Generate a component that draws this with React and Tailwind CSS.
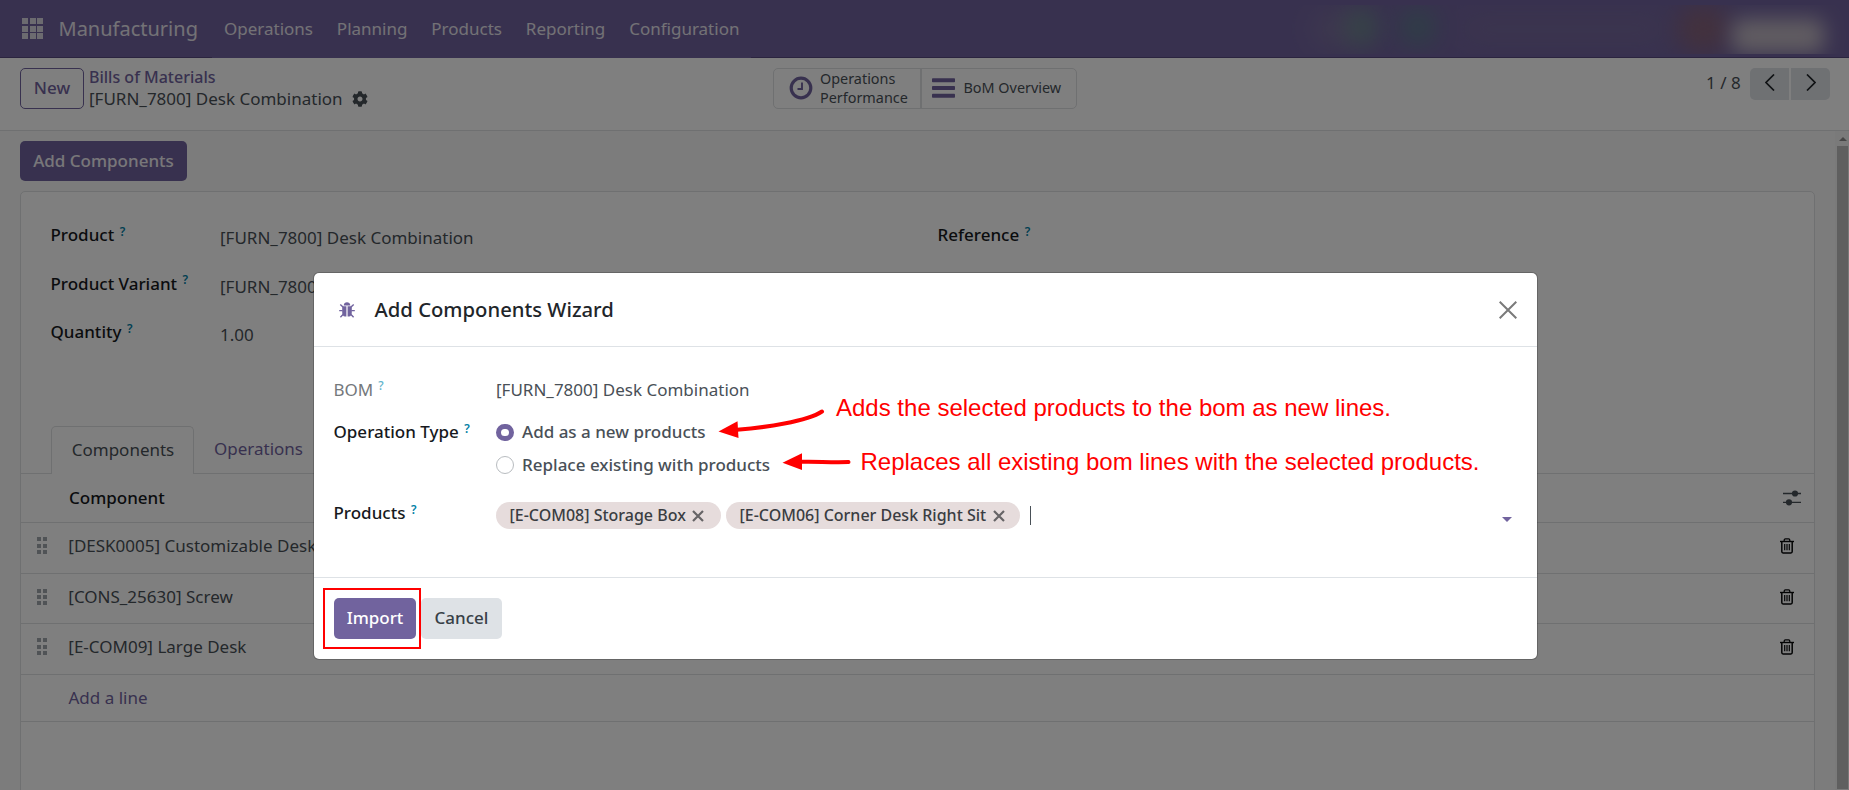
import React from "react";
import { FaCog } from "react-icons/fa";

const menus = ["Operations", "Planning", "Products", "Reporting", "Configuration"];

const lines = [
  { name: "[DESK0005] Customizable Desk", height: "h-[51px] pb-[5px]" },
  { name: "[CONS_25630] Screw", height: "h-[50px] pb-[3px]" },
  { name: "[E-COM09] Large Desk", height: "h-[51px] pb-[5px]" },
];

function AppsIcon() {
  return (
    <svg width="22" height="22" viewBox="0 0 22 22" fill="#d9d7e0" shapeRendering="crispEdges">
      {[0, 7.5, 15].map((y) =>
        [0, 7.5, 15].map((x) => <rect key={`${x}-${y}`} x={x} y={y} width="6.2" height="6.2" />)
      )}
    </svg>
  );
}

function ClockIcon() {
  return (
    <svg width="24" height="24" viewBox="0 0 24 24" fill="none" stroke="#71639e">
      <circle cx="12" cy="12" r="9.8" strokeWidth="3.2" />
      <path d="M13 6.5V13H8.5" strokeWidth="1.9" />
    </svg>
  );
}

function BarsIcon() {
  return (
    <svg width="23" height="20" viewBox="0 0 23 20" fill="#71639e">
      <rect y="0.3" width="23" height="4" rx="0.8" />
      <rect y="8" width="23" height="4" rx="0.8" />
      <rect y="15.7" width="23" height="4" rx="0.8" />
    </svg>
  );
}

function TrashIcon() {
  return (
    <svg width="14" height="16" viewBox="0 0 14 16" fill="none" stroke="#08090a">
      <path d="M0 3.5H14" strokeWidth="1.4" />
      <path d="M4.2 3.3V2.2C4.2 1.2 4.7 0.9 5.4 0.9H8.6C9.3 0.9 9.8 1.2 9.8 2.2V3.3" strokeWidth="1.3" />
      <path d="M1.8 3.5V13.6C1.8 14.5 2.2 14.9 3 14.9H11C11.8 14.9 12.2 14.5 12.2 13.6V3.5" strokeWidth="1.5" />
      <path d="M4.7 6V12.2M7 6V12.2M9.3 6V12.2" strokeWidth="1.2" />
    </svg>
  );
}

function SlidersIcon() {
  return (
    <svg width="18" height="16" viewBox="0 0 18 16" fill="#495057" stroke="#495057">
      <path d="M0 3.5H18M0 12.3H18" strokeWidth="1.3" />
      <circle cx="12" cy="3.5" r="3.1" stroke="none" />
      <circle cx="6" cy="12.3" r="3.1" stroke="none" />
    </svg>
  );
}

function BugIcon() {
  return (
    <svg width="16" height="16" viewBox="0 0 16 16" fill="#71639e" stroke="#71639e">
      <path d="M4.7 3.4C4.9 1.4 6.2 0.3 8 0.3S11.1 1.4 11.3 3.4Z" stroke="none" />
      <path d="M3.2 4.2H7.4V14.6H6C4.2 14.2 3.2 12.6 3.2 10.2ZM12.8 4.2H8.6V14.6H10C11.8 14.2 12.8 12.6 12.8 10.2Z" stroke="none" />
      <path d="M1.3 2.4L4 5M14.7 2.4L12 5M0.2 8.6H3.6M15.8 8.6H12.4M1.4 15.2L4.5 12M14.6 15.2L11.5 12" strokeWidth="1.4" fill="none" />
    </svg>
  );
}

function DragHandle() {
  return (
    <span className="grid grid-cols-2 gap-x-[2.3px] gap-y-[2.2px]">
      {[0, 1, 2, 3, 4, 5].map((i) => (
        <span key={i} className="size-1 bg-[#a1a6ad]" />
      ))}
    </span>
  );
}

function Help({ muted }) {
  return (
    <span
      className={
        muted
          ? "ml-[5px] align-[6px] text-[12px] leading-none font-medium text-[#5fb4cb]"
          : "ml-[5.5px] align-[5.5px] text-[12px] leading-none font-semibold text-[#0180a5]"
      }
    >
      ?
    </span>
  );
}

function Field({ label, value }) {
  return (
    <div className="flex h-[48.5px] leading-6">
      <div className="w-[169.5px] pt-[9px] font-medium whitespace-nowrap text-[#16191d]">
        {label}
        <Help />
      </div>
      <div className="pt-3 text-[#495057]">{value}</div>
    </div>
  );
}

function Navbar() {
  return (
    <header className="relative h-[58px] bg-[#71639e]">
      <div className="flex h-[57px] items-center pl-[22px] text-[#e6e4ec]">
        <AppsIcon />
        <span className="ml-[14.5px] text-xl">Manufacturing</span>
        <nav className="ml-[26px] flex gap-[23.9px]">
          {menus.map((m) => (
            <span key={m}>{m}</span>
          ))}
        </nav>
      </div>
      <div className="flex h-px justify-between">
        <span className="w-[212px] bg-[#57497f]" />
        <span className="w-[1098px] bg-[#57497f]" />
      </div>
      <div className="absolute top-[5px] right-0 h-[49px] w-[560px] overflow-hidden">
        <span className="absolute top-2 left-[22px] h-8 w-[60px] rounded-full bg-[#8a829f] opacity-50 blur-[14px]" />
        <span className="absolute top-1 left-[58px] h-9 w-[30px] rounded-full bg-[#62a080] opacity-60 blur-[12px]" />
        <span className="absolute top-1 left-[112px] h-9 w-[34px] rounded-full bg-[#509080] opacity-60 blur-[12px]" />
        <span className="absolute top-3 left-[170px] h-6 w-[210px] rounded-full bg-[#7e739c] opacity-50 blur-[14px]" />
        <span className="absolute top-0 left-[388px] h-12 w-[52px] rounded-full bg-[#8c6472] opacity-80 blur-[12px]" />
        <span className="absolute top-3.5 left-[443px] h-[34px] w-[92px] rounded-lg bg-[#ccc4c8] opacity-90 blur-[10px]" />
      </div>
    </header>
  );
}

function ControlPanel() {
  return (
    <div className="flex h-[73px] items-start border-b border-[#dee0e2] pt-[10px] pl-5">
      <button className="h-[41px] w-16 rounded-[5px] border border-[#71639e] pb-0.5 font-medium text-[#71639e]">
        New
      </button>
      <div className="-mt-[1px] ml-[5px] w-[684px] leading-[21px]">
        <div className="text-base leading-[21px] font-medium text-[#71639e]">Bills of Materials</div>
        <div className="flex items-center text-[#495057]">
          [FURN_7800] Desk Combination
          <FaCog className="ml-[9px] size-4" />
        </div>
      </div>
      <div className="flex h-[41px] w-[304px] items-center rounded-[5px] border border-[#dee0e2] text-[14.4px] leading-[19px] text-[#495057]">
        <div className="flex h-full w-[148px] items-center border-r-2 border-[#dee0e2] pb-0.5 pl-[14.5px]">
          <ClockIcon />
          <span className="ml-[7.5px]">
            Operations
            <br />
            Performance
          </span>
        </div>
        <div className="flex items-center pb-0.5 pl-[10px]">
          <BarsIcon />
          <span className="ml-[8.5px]">BoM Overview</span>
        </div>
      </div>
      <div className="ml-[629px] flex h-8 items-center text-[#495057]">
        <span className="w-[44px] pb-0.5 whitespace-nowrap">1 / 8</span>
        <button className="flex h-8 w-[39px] items-center justify-center rounded-l-[5px] bg-[#dee2e6] pb-[3px]">
          <svg width="10" height="17" viewBox="0 0 10 17" fill="none" stroke="#212529" strokeWidth="1.7">
            <path d="M9 0.5L1 8.5L9 16.5" />
          </svg>
        </button>
        <button className="ml-[2px] flex h-8 w-[39px] items-center justify-center rounded-r-[5px] bg-[#dee2e6] pb-[3px]">
          <svg width="10" height="17" viewBox="0 0 10 17" fill="none" stroke="#212529" strokeWidth="1.7">
            <path d="M1 0.5L9 8.5L1 16.5" />
          </svg>
        </button>
      </div>
    </div>
  );
}

function Sheet() {
  return (
    <div className="mt-[10px] h-[620px] w-[1795px] rounded-[5px] border border-[#dee0e2] bg-white">
      <div className="grid grid-cols-[887px_1fr] pt-[22px] pl-[29.5px]">
        <div>
          <Field label="Product" value="[FURN_7800] Desk Combination" />
          <Field label="Product Variant" value="[FURN_7800] Desk Combination" />
          <Field label="Quantity" value="1.00" />
        </div>
        <div>
          <Field label="Reference" />
        </div>
      </div>

      <div className="mt-[66.5px] flex h-12 border-b border-[#dee0e2] pl-[30px]">
        <div className="-mb-px flex h-12 w-[143px] items-center justify-center rounded-t-[5px] border border-b-0 border-[#dee0e2] bg-white pb-px pl-px text-[#495057]">
          Components
        </div>
        <div className="flex items-center pb-px pl-5 text-[#71639e]">Operations</div>
      </div>

      <div className="flex h-[49px] items-center border-b border-[#dee0e2] pr-[13px] pb-[1px] pl-[48px]">
        <span className="font-medium text-[#16191d]">Component</span>
        <span className="ml-auto">
          <SlidersIcon />
        </span>
      </div>
      {lines.map((line) => (
        <div
          key={line.name}
          className={`flex ${line.height} items-center border-b border-[#dee0e2] pr-[20.5px] pl-[15.5px] text-[#495057]`}
        >
          <DragHandle />
          <span className="ml-[21.5px]">{line.name}</span>
          <span className="ml-auto">
            <TrashIcon />
          </span>
        </div>
      ))}
      <div className="flex h-[47px] items-center border-b border-[#dee0e2] pl-[47.5px] text-[#71639e]">
        Add a line
      </div>
    </div>
  );
}

function Radio({ label, checked }) {
  return (
    <label className="flex h-6 items-center font-medium text-[#495057]">
      {checked ? (
        <span className="mt-px size-[17.5px] rounded-full border-[5.5px] border-[#71639e] bg-white" />
      ) : (
        <span className="mt-px size-[17.5px] rounded-full border border-[#b8bcc0] bg-white" />
      )}
      <span className="ml-[8.5px]">{label}</span>
    </label>
  );
}

function Tag({ label, width }) {
  return (
    <span
      className={`flex h-[27px] ${width} items-center rounded-full bg-[#e6dcdc] pb-px pl-[13.5px] text-base leading-6 font-medium whitespace-nowrap text-[#3a3d42]`}
    >
      {label}
      <svg className="mt-px ml-[6.5px]" width="12" height="12" viewBox="0 0 12 12" fill="none" stroke="#666466" strokeWidth="2.2">
        <path d="M1 1L11 11M11 1L1 11" />
      </svg>
    </span>
  );
}

function Wizard() {
  return (
    <div className="h-[388px] w-[1225px] rounded-[6px] border border-black/20 bg-white bg-clip-padding">
      <div className="flex h-[74px] items-center border-b border-[#dee2e6] pr-[20px] pl-[25px]">
        <BugIcon />
        <h4 className="ml-[19.5px] pb-px text-[20.25px] font-medium text-[#212529]">Add Components Wizard</h4>
        <svg className="ml-auto" width="18" height="18" viewBox="0 0 18 18" fill="none" stroke="#7a7a7a" strokeWidth="2">
          <path d="M0.7 0.7L17.3 17.3M17.3 0.7L0.7 17.3" />
        </svg>
      </div>

      <div className="h-[231px] border-b border-[#dee2e6] pt-[30.5px] pr-[25px] pl-[19.5px] leading-6">
        <div className="flex">
          <div className="w-[162.5px] text-[#74787c]">
            BOM
            <Help muted />
          </div>
          <div className="text-[#495057]">[FURN_7800] Desk Combination</div>
        </div>
        <div className="mt-[18.5px] flex">
          <div className="w-[162.5px] font-medium whitespace-nowrap text-[#16191d]">
            Operation Type
            <Help />
          </div>
          <div className="flex flex-col gap-[8.5px]">
            <Radio label="Add as a new products" checked />
            <Radio label="Replace existing with products" />
          </div>
        </div>
        <div className="mt-[24.5px] flex">
          <div className="w-[162.5px] font-medium text-[#16191d]">
            Products
            <Help />
          </div>
          <div className="mt-[1px] flex flex-1 items-center gap-[5px]">
            <Tag label="[E-COM08] Storage Box" width="w-[225px]" />
            <Tag label="[E-COM06] Corner Desk Right Sit" width="w-[294px]" />
            <span className="ml-[5px] h-[19px] w-px bg-[#495057]" />
            <svg className="mt-2 ml-auto" width="10" height="5" viewBox="0 0 10 5" fill="#71639e">
              <path d="M0 0H10L5 5Z" />
            </svg>
          </div>
        </div>
      </div>

      <div className="flex gap-[5px] pt-5 pl-5 font-medium">
        <button className="h-[41px] w-[82px] rounded-[5px] bg-[#71639e] pb-0.5 text-white">Import</button>
        <button className="h-[41px] w-[81px] rounded-[5px] bg-[#dee2e6] pb-0.5 text-[#374047]">Cancel</button>
      </div>
    </div>
  );
}

function Annotations() {
  return (
    <div className="absolute inset-0 font-['Liberation_Sans',Arial,sans-serif] text-[24px] leading-7 whitespace-nowrap text-[#ff0000]">
      <svg className="absolute top-[400px] left-[710px]" width="150" height="80" viewBox="0 0 150 80" fill="#ff0000" stroke="#ff0000" strokeLinecap="round">
        <path d="M8.5 31.5L27.5 21.3L28.5 38Z" stroke="none" />
        <path d="M27 29.8C55 27.5 97 21.5 112 11.5" fill="none" strokeWidth="4" />
        <path d="M72.5 62.7L92 53.3V70Z" stroke="none" />
        <path d="M92 61.8C106 61.3 120 62.6 138.5 62" fill="none" strokeWidth="4" />
      </svg>
      <span className="absolute top-[394px] left-[836px]">Adds the selected products to the bom as new lines.</span>
      <span className="absolute top-[448px] left-[860.5px]">Replaces all existing bom lines with the selected products.</span>
      <span className="absolute top-[588px] left-[323px] h-[61px] w-[98px] border-2 border-[#ff0000]" />
    </div>
  );
}

export default function App() {
  return (
    <div className="relative h-[790px] w-[1849px] overflow-hidden bg-white font-['Noto_Sans',sans-serif] text-[17px]">
      <Navbar />
      <ControlPanel />
      <div className="flex h-[659px] bg-[#f9f9f9]">
        <div className="w-[1835px] pt-[10px] pl-5">
          <button className="block h-10 w-[167px] rounded-[5px] bg-[#71639e] pb-px font-medium text-[#f0eff4]">
            Add Components
          </button>
          <Sheet />
        </div>
        <div className="flex w-[14px] flex-col bg-[#f5f5f5] pt-[6px] pr-px pl-[2px]">
          <svg className="mx-auto" width="8" height="4" viewBox="0 0 8 4" fill="#8c8c8c">
            <path d="M4 0L8 4H0Z" />
          </svg>
          <div className="mt-[5px] h-[643px] bg-[#bebebe]" />
        </div>
      </div>

      <div className="absolute inset-0 bg-black/50 pt-[272px] pl-[313px]">
        <Wizard />
      </div>
      <Annotations />
    </div>
  );
}
